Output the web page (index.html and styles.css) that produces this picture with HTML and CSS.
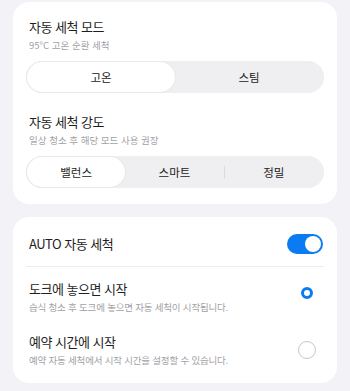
FILE: index.html
```html
<!DOCTYPE html>
<html lang="ko">
<head>
<meta charset="utf-8">
<link rel="stylesheet" href="styles.css">
</head>
<body>
<div class="card card-top">
  <div class="section">
    <div class="title">자동 세척 모드</div>
    <div class="sub">95°C 고온 순환 세척</div>
    <div class="seg seg-2">
      <div class="opt active">고온</div>
      <div class="opt">스팀</div>
    </div>
  </div>
  <div class="section section-2">
    <div class="title">자동 세척 강도</div>
    <div class="sub">일상 청소 후 해당 모드 사용 권장</div>
    <div class="seg seg-3">
      <div class="opt active">밸런스</div>
      <div class="opt">스마트</div>
      <div class="sep"></div>
      <div class="opt">정밀</div>
    </div>
  </div>
</div>
<div class="card card-bottom">
  <div class="row row-toggle">
    <div class="title">AUTO 자동 세척</div>
    <div class="toggle"><div class="knob"></div></div>
  </div>
  <div class="divider"></div>
  <div class="row row-option row-first">
    <div class="texts">
      <div class="title">도크에 놓으면 시작</div>
      <div class="sub sub-long">습식 청소 후 도크에 놓으면 자동 세척이 시작됩니다.</div>
    </div>
    <div class="radio checked"></div>
  </div>
  <div class="row row-option row-second">
    <div class="texts">
      <div class="title">예약 시간에 시작</div>
      <div class="sub sub-long">예약 자동 세척에서 시작 시간을 설정할 수 있습니다.</div>
    </div>
    <div class="radio"></div>
  </div>
</div>
</body>
</html>
```
FILE: styles.css
```css
* { box-sizing: border-box; }
html, body { margin: 0; }
body {
  background: #f2f2f7;
  padding: 2px 13px 0;
  font-family: "Noto Sans CJK KR", "Noto Sans", sans-serif;
  color: #1f1f1f;
  width: 350px;
  height: 391px;
  overflow: hidden;
}
.card {
  background: #fff;
  border-radius: 16px;
  padding: 0 13px;
}
.card-top { padding-top: 16px; padding-bottom: 16px; }
.card-bottom { margin-top: 13px; padding-bottom: 16px; }
.title {
  font-size: 13px;
  line-height: 18px;
  letter-spacing: -0.5px;
  padding-left: 3px;
  color: #1e1e1e;
}
.sub {
  font-size: 9.5px;
  line-height: 14px;
  margin-top: 2px;
  padding-left: 3px;
  color: #a2a2a6;
}
.sub-long { letter-spacing: -0.2px; }
.seg {
  margin-top: 9px;
  height: 32px;
  background: #efeff2;
  border-radius: 16px;
  display: flex;
  align-items: center;
  padding: 1px;
}
.opt {
  flex: 1;
  height: 30px;
  display: flex;
  align-items: center;
  justify-content: center;
  font-size: 11.5px;
  color: #222;
  border-radius: 15px;
}
.opt.active {
  background: #fff;
  box-shadow: 0 0 0 1px #e8e8ec;
}
.sep {
  width: 1px;
  height: 13px;
  background: #dadadf;
}
.section-2 { margin-top: 20px; }
.row {
  display: flex;
  align-items: center;
  justify-content: space-between;
}
.row-toggle { padding: 17px 1px 12px 0; }
.toggle {
  width: 36px;
  height: 20px;
  border-radius: 10px;
  background: #0b7bf3;
  display: flex;
  align-items: center;
  justify-content: flex-end;
  padding: 2px;
}
.knob {
  width: 16px;
  height: 16px;
  border-radius: 50%;
  background: #fff;
}
.divider {
  height: 1px;
  background: #ececef;
}
.row-first { padding-top: 13px; }
.row-second { padding-top: 19px; }
.radio {
  width: 18px;
  height: 18px;
  border-radius: 50%;
  border: 1px solid #c8c8cc;
  margin-right: 8px;
}
.radio.checked {
  width: 12px;
  height: 12px;
  border: 3.5px solid #0b7bf3;
  margin-right: 11px;
  margin-top: -8px;
}
```
